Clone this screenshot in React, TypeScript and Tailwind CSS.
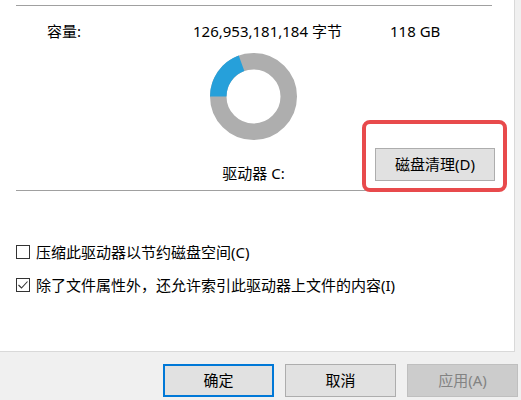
import React from 'react';

const FONT = { fontFamily: '"Noto Sans", "Noto Sans CJK SC", sans-serif' };

// ── Donut: used vs free space ────────────────────────────────────────────────
function Donut() {
  const size = 87;
  const c = size / 2;
  const rOut = 43.5;
  const rIn = 27;
  const rMid = (rOut + rIn) / 2;
  const stroke = rOut - rIn;
  const circ = 2 * Math.PI * rMid;
  const used = 70 / 360;
  return (
    <svg width={size} height={size} viewBox={`0 0 ${size} ${size}`}>
      <circle cx={c} cy={c} r={rMid} fill="none" stroke="#aeaeae" strokeWidth={stroke} />
      <circle
        cx={c}
        cy={c}
        r={rMid}
        fill="none"
        stroke="#26a0da"
        strokeWidth={stroke}
        strokeDasharray={`${circ * used} ${circ}`}
        transform={`rotate(180 ${c} ${c})`}
      />
    </svg>
  );
}

function CheckRow({ checked, label }: { checked?: boolean; label: string }) {
  return (
    <div className="flex items-center h-5">
      <div className="w-[14px] h-[14px] ml-4 border border-[#333333] bg-white flex items-center justify-center">
        {checked && (
          <svg width="12" height="12" viewBox="0 0 12 12">
            <polyline points="1.5,6 4.5,9 10.5,2.5" fill="none" stroke="#333333" strokeWidth="1.1" />
          </svg>
        )}
      </div>
      <span className="ml-[6px] text-[15px] leading-5 text-black whitespace-nowrap">{label}</span>
    </div>
  );
}

function DlgButton({ children, primary, disabled }: { children: React.ReactNode; primary?: boolean; disabled?: boolean }) {
  if (disabled) {
    return (
      <div className="w-[111px] h-[33px] flex items-center justify-center bg-[#cccccc] border border-[#bfbfbf] text-[15px] text-[#838383]">
        {children}
      </div>
    );
  }
  return (
    <div
      className={
        'w-[111px] h-[33px] flex items-center justify-center bg-[#e1e1e1] text-[15px] text-black ' +
        (primary ? 'border-2 border-[#0078d7]' : 'border border-[#adadad]')
      }
    >
      {children}
    </div>
  );
}

export default function App() {
  return (
    <div className="w-[521px] h-[400px] bg-[#f0f0f0] overflow-hidden" style={FONT}>
      {/* ── White property page ─────────────────────────────────────────── */}
      <div className="relative w-[515px] h-[352px] bg-white border-r border-b border-[#d9d9d9] pt-[5px]">
        <div className="ml-4 w-[476px] h-px bg-[#a0a0a0]" />

        {/* Capacity row */}
        <div className="flex mt-[15px] h-5 text-[15px] leading-5 text-black whitespace-nowrap">
          <span className="pl-[47px] w-[193px]">容量:</span>
          <span className="w-[197px]">126,953,181,184 字节</span>
          <span>118 GB</span>
        </div>

        {/* Donut + cleanup button */}
        <div className="flex items-end">
          <div className="ml-[210px] w-[87px] flex flex-col items-center">
            <div className="mt-3">
              <Donut />
            </div>
            <div className="mt-[23px] h-5 text-[15px] leading-5 text-black whitespace-nowrap">驱动器 C:</div>
          </div>
          <div className="ml-[78px] mb-[2px] w-[120px] h-[33px] flex items-center justify-center bg-[#e1e1e1] border border-[#adadad] text-[15px] text-black">
            磁盘清理(D)
          </div>
        </div>

        <div className="mt-[7px] ml-4 w-[476px] h-px bg-[#a0a0a0]" />

        {/* Options */}
        <div className="mt-[51px] flex flex-col gap-[13px]">
          <CheckRow label="压缩此驱动器以节约磁盘空间(C)" />
          <CheckRow checked label="除了文件属性外，还允许索引此驱动器上文件的内容(I)" />
        </div>

        {/* Red highlight annotation */}
        <div className="absolute left-[362px] top-[120px] w-[145px] h-[72px] border-4 border-[#e84a4c] rounded-[8px]" />
      </div>

      {/* ── Dialog buttons ─────────────────────────────────────────────── */}
      <div className="flex mt-3 ml-[163px] gap-[11px]">
        <DlgButton primary>确定</DlgButton>
        <DlgButton>取消</DlgButton>
        <DlgButton disabled>应用(A)</DlgButton>
      </div>
    </div>
  );
}
